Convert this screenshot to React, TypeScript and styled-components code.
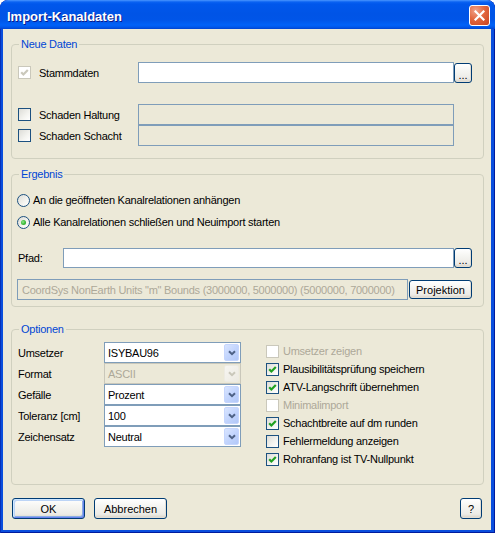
import React from "react";
import styled, { createGlobalStyle } from "styled-components";

const GlobalStyle = createGlobalStyle`
  html, body { margin: 0; padding: 0; background: #ffffff; }
  body {
    font-family: "Liberation Sans", Arial, sans-serif;
    font-size: 11px;
    letter-spacing: -0.25px;
    color: #000;
  }
  * { box-sizing: border-box; }
`;

const Window = styled.div`
  width: 495px;
  height: 533px;
  display: flex;
  flex-direction: column;
  background: #0A4EDD;
  border-radius: 8px 8px 0 0;
  overflow: hidden;
  box-shadow: inset 1px 0 0 #0831B8, inset -1px 0 0 #001B9E, inset 0 -1px 0 #001B9E;
`;

const TitleBar = styled.div`
  height: 29px;
  flex: none;
  display: flex;
  align-items: flex-start;
  padding: 0 5px 0 7px;
  border-radius: 8px 8px 0 0;
  background: linear-gradient(
    to bottom,
    #4A96FF 0px,
    #0A62F2 2px,
    #0057EC 4px,
    #0054E6 14px,
    #0055E8 20px,
    #0062F8 25px,
    #0058EC 27px,
    #0043CF 29px
  );
`;

const Title = styled.span`
  padding-top: 9px;
  font-weight: bold;
  font-size: 13px;
  letter-spacing: 0;
  line-height: 15px;
  color: #ffffff;
  text-shadow: 1px 1px 0 #0A1B8A;
`;

const CloseButton = styled.div`
  margin-left: auto;
  margin-top: 5px;
  width: 21px;
  height: 21px;
  border: 1px solid #ffffff;
  border-radius: 3px;
  background: radial-gradient(circle at 30% 25%, #F0A28A 0%, #E2673F 45%, #C9431F 100%);
  display: flex;
  align-items: center;
  justify-content: center;
`;

const Client = styled.div`
  flex: 1;
  margin: 0 4px 3px 3px;
  background: #ECE9D8;
  padding: 15px 7px 0 8px;
  display: flex;
  flex-direction: column;
`;

const GroupBox = styled.div<{ $height: number; $top: number; $pt: number }>`
  position: relative;
  flex: none;
  height: ${(p) => p.$height}px;
  margin-top: ${(p) => p.$top}px;
  border: 1px solid #D0D0BF;
  border-radius: 4px;
  padding: ${(p) => p.$pt}px 11px 0 6px;
`;

const Legend = styled.span`
  position: absolute;
  top: -8px;
  left: 7px;
  padding: 0 2px;
  line-height: 14px;
  background: #ECE9D8;
  color: #0046D5;
`;

const DataGrid = styled.div`
  display: grid;
  grid-template-columns: 120px 1fr 18px;
  grid-auto-rows: 21px;
  align-items: center;
`;

const GridSpacer = styled.div`
  grid-column: 1 / -1;
`;

const CheckLabel = styled.label<{ $disabled?: boolean }>`
  display: flex;
  align-items: center;
  gap: 8px;
  height: 100%;
  color: ${(p) => (p.$disabled ? "#ACA899" : "#000")};
  white-space: nowrap;
`;

const OptionLabel = styled(CheckLabel)`
  gap: 4px;
  height: 18px;
`;

const Box = styled.span<{ $disabled?: boolean }>`
  flex: none;
  width: 13px;
  height: 13px;
  border: 1px solid ${(p) => (p.$disabled ? "#CAC8BB" : "#1C5180")};
  background: ${(p) =>
    p.$disabled ? "#ffffff" : "linear-gradient(135deg, #DCDCD7 0%, #F4F4F0 60%, #FFFFFF 100%)"};
  display: flex;
  align-items: center;
  justify-content: center;
`;

const TextBox = styled.div<{ $disabled?: boolean; $h: number }>`
  height: ${(p) => p.$h}px;
  border: 1px solid #7F9DB9;
  background: ${(p) => (p.$disabled ? "#ECE9D8" : "#ffffff")};
  color: #ACA899;
  padding-left: 4px;
  display: flex;
  align-items: center;
  white-space: nowrap;
  overflow: hidden;
`;

const XPButton = styled.button<{ $w?: number; $h: number; $default?: boolean }>`
  width: ${(p) => (p.$w ? `${p.$w}px` : "100%")};
  height: ${(p) => p.$h}px;
  padding: 0;
  font: inherit;
  color: #000;
  border: 1px solid #003C74;
  border-radius: 3px;
  background: linear-gradient(to bottom, #FFFFFF 0%, #F6F6F3 35%, #ECEBE6 80%, #D8D2C6 100%);
  box-shadow: ${(p) =>
    p.$default
      ? "inset 1px 1px 0 #CEE7FF, inset -1px -1px 0 #6982EE, inset 2px 2px 0 #BCD4F6, inset -2px -2px 0 #89ADE4"
      : "inset -1px -1px 0 #E3DED4"};
  display: flex;
  align-items: center;
  justify-content: center;
  flex: none;
`;

const DotsButton = styled(XPButton)`
  align-items: flex-end;
  padding-bottom: 3px;
  line-height: 8px;
`;

const RadioRow = styled.label<{ $top: number }>`
  display: flex;
  align-items: center;
  gap: 3px;
  height: 16px;
  margin-top: ${(p) => p.$top}px;
  margin-left: -1px;
  white-space: nowrap;
`;

const RadioCircle = styled.span`
  flex: none;
  width: 13px;
  height: 13px;
  border-radius: 50%;
  border: 1px solid #1C5180;
  background: linear-gradient(135deg, #DCDCD7 0%, #F4F4F0 60%, #FFFFFF 100%);
  display: flex;
  align-items: center;
  justify-content: center;
`;

const RadioDot = styled.span`
  width: 5px;
  height: 5px;
  border-radius: 50%;
  background: radial-gradient(circle at 40% 40%, #8FE98C 0%, #3EBB3B 50%, #1F9A1F 100%);
`;

const PathRow = styled.div`
  margin-top: 18px;
  display: grid;
  grid-template-columns: 45px 1fr 18px;
  align-items: center;
  height: 20px;
`;

const CoordRow = styled.div`
  margin-top: 11px;
  margin-left: -1px;
  display: grid;
  grid-template-columns: 1fr 63px;
  column-gap: 1px;
  align-items: center;
  height: 21px;
`;

const OptionsBody = styled.div`
  display: flex;
`;

const ComboGrid = styled.div`
  display: grid;
  grid-template-columns: 86px 137px;
  grid-auto-rows: 21px;
  align-items: center;
`;

const Combo = styled.div<{ $disabled?: boolean }>`
  height: 21px;
  display: flex;
  align-items: center;
  border: 1px solid ${(p) => (p.$disabled ? "#C9C7BA" : "#7F9DB9")};
  background: ${(p) => (p.$disabled ? "#ECE9D8" : "#ffffff")};
  color: ${(p) => (p.$disabled ? "#ACA899" : "#000")};
  padding: 1px 1px 1px 3px;
`;

const ComboText = styled.span`
  flex: 1;
  white-space: nowrap;
`;

const DropButton = styled.span<{ $disabled?: boolean }>`
  width: 15px;
  height: 17px;
  border-radius: 2px;
  display: flex;
  align-items: center;
  justify-content: center;
  border: 1px solid ${(p) => (p.$disabled ? "#EDEBE3" : "#C6D6FD")};
  background: ${(p) =>
    p.$disabled
      ? "linear-gradient(135deg, #F7F6F2, #ECEAE2)"
      : "linear-gradient(135deg, #D9E5FF 0%, #C3D5FD 50%, #B2C8F8 100%)"};
`;

const OptionList = styled.div`
  margin-left: 25px;
  display: flex;
  flex-direction: column;
`;

const ButtonBar = styled.div`
  margin-top: 13px;
  display: flex;
  gap: 9px;
  padding: 0 2px 0 1px;
`;

const HelpSlot = styled.div`
  margin-left: auto;
`;

const CheckMark = ({ color }: { color: string }) => (
  <svg width="9" height="9" viewBox="0 0 9 9">
    <path d="M1.2 4.2 L3.4 6.5 L7.8 2" fill="none" stroke={color} strokeWidth="2.2" />
  </svg>
);

const Chevron = ({ color }: { color: string }) => (
  <svg width="8" height="6" viewBox="0 0 8 6">
    <path d="M1 1.2 L4 4.2 L7 1.2" fill="none" stroke={color} strokeWidth="2" />
  </svg>
);

const CloseX = () => (
  <svg width="11" height="11" viewBox="0 0 11 11">
    <path d="M1.5 1.5 L9.5 9.5 M9.5 1.5 L1.5 9.5" stroke="#ffffff" strokeWidth="2.2" strokeLinecap="square" />
  </svg>
);

type CheckProps = { label: string; checked?: boolean; disabled?: boolean };

const CheckOption = ({ label, checked, disabled }: CheckProps) => (
  <OptionLabel $disabled={disabled}>
    <Box $disabled={disabled}>{checked && <CheckMark color={disabled ? "#CAC8BB" : "#21A121"} />}</Box>
    {label}
  </OptionLabel>
);

const combos: { label: string; value: string; disabled?: boolean }[] = [
  { label: "Umsetzer", value: "ISYBAU96" },
  { label: "Format", value: "ASCII", disabled: true },
  { label: "Gefälle", value: "Prozent" },
  { label: "Toleranz [cm]", value: "100" },
  { label: "Zeichensatz", value: "Neutral" },
];

const options: CheckProps[] = [
  { label: "Umsetzer zeigen", disabled: true },
  { label: "Plausibilitätsprüfung speichern", checked: true },
  { label: "ATV-Langschrift übernehmen", checked: true },
  { label: "Minimalimport", disabled: true },
  { label: "Schachtbreite auf dm runden", checked: true },
  { label: "Fehlermeldung anzeigen" },
  { label: "Rohranfang ist TV-Nullpunkt", checked: true },
];

export default function App() {
  return (
    <>
      <GlobalStyle />
      <Window>
        <TitleBar>
          <Title>Import-Kanaldaten</Title>
          <CloseButton>
            <CloseX />
          </CloseButton>
        </TitleBar>
        <Client>
          <GroupBox $height={115} $top={0} $pt={17}>
            <Legend>Neue Daten</Legend>
            <DataGrid>
              <CheckLabel>
                <Box $disabled>
                  <CheckMark color="#CAC8BB" />
                </Box>
                Stammdaten
              </CheckLabel>
              <TextBox $h={21} />
              <DotsButton $w={18} $h={20}>...</DotsButton>
              <GridSpacer />
              <CheckLabel>
                <Box />
                Schaden Haltung
              </CheckLabel>
              <TextBox $h={21} $disabled />
              <span />
              <CheckLabel>
                <Box />
                Schaden Schacht
              </CheckLabel>
              <TextBox $h={21} $disabled />
              <span />
            </DataGrid>
          </GroupBox>

          <GroupBox $height={133} $top={15} $pt={17}>
            <Legend>Ergebnis</Legend>
            <RadioRow $top={0}>
              <RadioCircle />
              An die geöffneten Kanalrelationen anhängen
            </RadioRow>
            <RadioRow $top={6}>
              <RadioCircle>
                <RadioDot />
              </RadioCircle>
              Alle Kanalrelationen schließen und Neuimport starten
            </RadioRow>
            <PathRow>
              <span>Pfad:</span>
              <TextBox $h={20} />
              <DotsButton $w={18} $h={20}>...</DotsButton>
            </PathRow>
            <CoordRow>
              <TextBox $h={21} $disabled>
                CoordSys NonEarth Units "m" Bounds (3000000, 5000000) (5000000, 7000000)
              </TextBox>
              <XPButton $h={19}>Projektion</XPButton>
            </CoordRow>
          </GroupBox>

          <GroupBox $height={156} $top={22} $pt={12}>
            <Legend>Optionen</Legend>
            <OptionsBody>
              <ComboGrid>
                {combos.map((c) => (
                  <React.Fragment key={c.label}>
                    <span>{c.label}</span>
                    <Combo $disabled={c.disabled}>
                      <ComboText>{c.value}</ComboText>
                      <DropButton $disabled={c.disabled}>
                        <Chevron color={c.disabled ? "#C9C7BA" : "#4D6185"} />
                      </DropButton>
                    </Combo>
                  </React.Fragment>
                ))}
              </ComboGrid>
              <OptionList>
                {options.map((o) => (
                  <CheckOption key={o.label} {...o} />
                ))}
              </OptionList>
            </OptionsBody>
          </GroupBox>

          <ButtonBar>
            <XPButton $w={73} $h={21} $default>
              OK
            </XPButton>
            <XPButton $w={73} $h={21}>
              Abbrechen
            </XPButton>
            <HelpSlot>
              <XPButton $w={22} $h={21}>
                ?
              </XPButton>
            </HelpSlot>
          </ButtonBar>
        </Client>
      </Window>
    </>
  );
}
